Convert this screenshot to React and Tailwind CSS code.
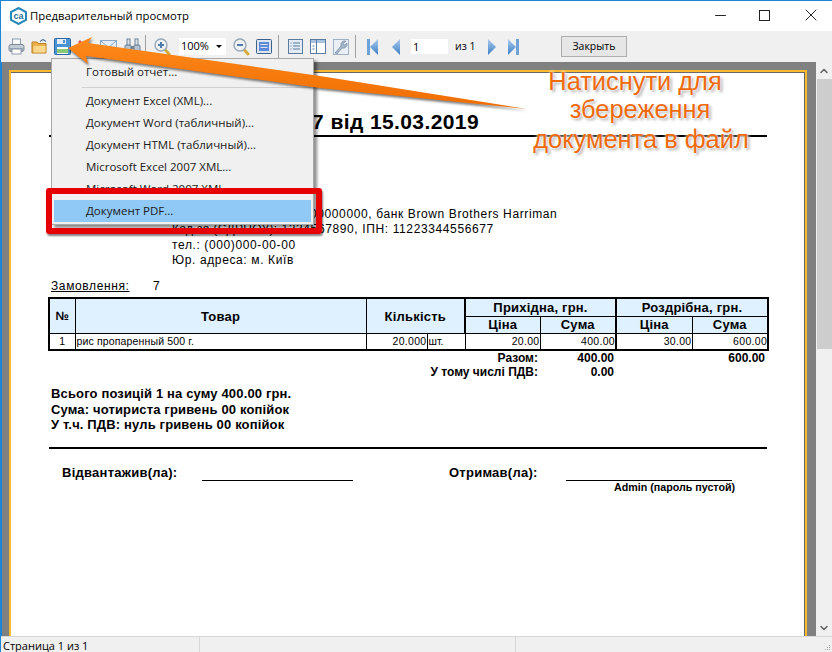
import { ChevronDown, ChevronUp, Minus, X } from "lucide-react";

const UI = "font-['Open_Sans','Noto_Sans',sans-serif]";
const DOC = "font-['Liberation_Sans',Arial,sans-serif]";

// toolbar pictures, all about 16x16
function Printer() {
  return (
    <svg width="17" height="17" viewBox="0 0 17 17">
      <rect x="4.500" y="1" width="8" height="6" fill="#f7f9fb" stroke="#8e9cad" />
      <rect x="1" y="6.500" width="15" height="7" rx="2" fill="#c3ccd6" stroke="#7c8896" />
      <rect x="1.500" y="10" width="14" height="3" fill="#97a3b0" />
      <rect x="4" y="11" width="9" height="5" fill="#fff" stroke="#8e9cad" />
    </svg>
  );
}

function Folder() {
  return (
    <svg width="17" height="17" viewBox="0 0 17 17">
      <path d="M1 4h5l1 1.500h8V15H1z" fill="#eeb04a" stroke="#b87f22" />
      <rect x="2.500" y="8" width="12" height="6.500" fill="#f9d98e" />
      <path d="M9 3.500l3-2 3 2" fill="none" stroke="#5e7b97" strokeWidth="1.200" />
    </svg>
  );
}

function Floppy() {
  return (
    <svg width="17" height="17" viewBox="0 0 17 17">
      <rect x="0.500" y="0.500" width="16" height="16" rx="1" fill="#4a94d6" stroke="#2a659f" />
      <rect x="3" y="1" width="9" height="5" fill="#e3edf6" />
      <rect x="9" y="2" width="2" height="3" fill="#4a94d6" />
      <rect x="3" y="9" width="11" height="7" fill="#fff" />
      <rect x="3" y="11" width="11" height="4" fill="#86c873" />
    </svg>
  );
}

function RedMark() {
  return (
    <svg width="16" height="17" viewBox="0 0 16 17">
      <path d="M5 2l3 3 3-3 2 2-3 3 3 3-2 2-3-3-3 3-2-2 3-3-3-3z" fill="#d9534f" />
    </svg>
  );
}

function Envelope() {
  return (
    <svg width="17" height="13" viewBox="0 0 17 13">
      <rect x="0.500" y="0.500" width="16" height="12" fill="#e2edf8" stroke="#8ba8c6" />
      <path d="M1 1l7.500 6.500L16 1" fill="none" stroke="#8ba8c6" />
    </svg>
  );
}

function Binoculars() {
  return (
    <svg width="17" height="17" viewBox="0 0 17 17">
      <rect x="1" y="7" width="6" height="9" rx="1" fill="#b4c3d2" stroke="#6f8397" />
      <rect x="10" y="7" width="6" height="9" rx="1" fill="#b4c3d2" stroke="#6f8397" />
      <rect x="3" y="1" width="3" height="6" fill="#dbe3ea" stroke="#6f8397" />
      <rect x="11" y="1" width="3" height="6" fill="#dbe3ea" stroke="#6f8397" />
      <rect x="7" y="8" width="3" height="3" fill="#6f8397" />
    </svg>
  );
}

function Magnifier({ plus }) {
  return (
    <svg width="17" height="18" viewBox="0 0 17 18">
      <line x1="10.500" y1="11" x2="15" y2="16" stroke="#d2ac3c" strokeWidth="3" strokeLinecap="round" />
      <circle cx="7" cy="7" r="6" fill="#eef2f6" stroke="#98a7b6" strokeWidth="1.400" />
      <rect x="4" y="6" width="6" height="2" fill="#4f7cab" />
      {plus && <rect x="6" y="4" width="2" height="6" fill="#4f7cab" />}
    </svg>
  );
}

function PageWidth() {
  return (
    <svg width="16" height="15" viewBox="0 0 16 15">
      <rect x="0.500" y="0.500" width="15" height="14" rx="1" fill="#dce6f2" stroke="#3c5f8c" />
      <rect x="3" y="3" width="10" height="9" fill="#5b8bd6" />
      <rect x="4.500" y="5" width="7" height="1" fill="#dce6f2" />
      <rect x="4.500" y="8" width="7" height="1" fill="#dce6f2" />
    </svg>
  );
}

function Outline() {
  return (
    <svg width="15" height="15" viewBox="0 0 15 15">
      <rect x="0.500" y="0.500" width="14" height="14" fill="#e3ecf6" stroke="#5a7aa0" />
      <path d="M5 4h7M5 7h7M5 10h7" stroke="#5a7aa0" />
      <path d="M2.500 4h1M2.500 7h1M2.500 10h1" stroke="#5a7aa0" />
    </svg>
  );
}

function Columns() {
  return (
    <svg width="16" height="15" viewBox="0 0 16 15">
      <rect x="0.500" y="0.500" width="15" height="14" fill="#fff" stroke="#5a7aa0" />
      <rect x="1" y="1" width="14" height="3" fill="#a9c4e2" />
      <line x1="6.500" y1="1" x2="6.500" y2="14" stroke="#5a7aa0" />
      <path d="M2.500 7h2M2.500 10h2" stroke="#5a7aa0" />
    </svg>
  );
}

function Wrench() {
  return (
    <svg width="16" height="17" viewBox="0 0 16 17">
      <rect x="0.500" y="1.500" width="15" height="15" fill="#e9eff5" stroke="#9fb1c4" />
      <path d="M2 15l6-7a4 4 0 0 1 5-5l-2.500 2.500 1 1.500 2.500-2a4 4 0 0 1-5 5l-5 6z" fill="#a3b6ca" stroke="#6d849e" strokeWidth="0.600" />
    </svg>
  );
}

function NavArrow({ dir, bar }) {
  const points = dir === "left" ? "9,0 9,16 1,8" : "1,0 1,16 9,8";
  return (
    <svg width={bar ? 11 : 9} height="16" viewBox={bar ? "0 0 11 16" : "0 0 9 16"}>
      <defs>
        <linearGradient id="nav" x1="0" x2="0" y1="0" y2="1">
          <stop offset="0" stopColor="#a9cbee" />
          <stop offset="1" stopColor="#3d7fc6" />
        </linearGradient>
      </defs>
      {bar && dir === "left" && <rect x="0" y="0" width="3" height="16" fill="#6fa3d8" />}
      {bar && dir === "right" && <rect x="8" y="0" width="3" height="16" fill="#6fa3d8" />}
      <polygon
        points={bar && dir === "left" ? "11,0 11,16 3,8" : bar ? "0,0 0,16 8,8" : points}
        fill="url(#nav)"
      />
    </svg>
  );
}

function AppLogo() {
  return (
    <svg width="17" height="18" viewBox="0 0 17 18">
      <path d="M8.500 1L16 5v8l-7.500 4L1 13V5z" fill="#fff" stroke="#2487b8" strokeWidth="2" />
      <text x="8.500" y="12" textAnchor="middle" fontSize="9" fontWeight="700" fontFamily="Liberation Sans" fill="#1f6f98">
        ca
      </text>
    </svg>
  );
}

function Sep() {
  return <div className="w-px h-[23px] bg-[#a0a0a0]" />;
}

const menuItems = [
  "Документ Excel (XML)...",
  "Документ Word (табличный)...",
  "Документ HTML (табличный)...",
  "Microsoft Excel 2007 XML...",
  "Microsoft Word 2007 XML...",
];

function SaveMenu() {
  return (
    <div className={`absolute left-[50px] top-[57px] w-[263px] h-[167px] bg-[#f0f0f0] border border-[#a9a9a9] shadow-[3px_3px_3px_rgba(0,0,0,0.45)] text-[11.500px] text-[#1a1a1a] ${UI}`}>
      <div className="h-[22px] mt-[2px] pl-[34px] flex items-center">Готовый отчет...</div>
      <div className="h-px bg-[#d0d0d0] ml-[30px] mr-[2px] mt-[4px] mb-[2px]" />
      {menuItems.map((label) => (
        <div key={label} className="h-[22px] pl-[34px] flex items-center">{label}</div>
      ))}
      <div className="h-[22px] mx-[2px] pl-[32px] flex items-center bg-[#90c8f6]">Документ PDF...</div>
    </div>
  );
}

function Signature({ label, lineWidth, gap, width }) {
  return (
    <div className={`flex items-start ${width}`}>
      <span>{label}</span>
      <div className={`border-b border-black h-[16px] ${lineWidth} ${gap}`} />
    </div>
  );
}

function Report() {
  return (
    <div className={`ml-[37px] w-[720px] text-black ${DOC}`}>
      <div className="h-[65px] flex items-end justify-end pr-[288px] font-bold text-[21px] tracking-[0.400px] leading-none border-b-2 border-black ml-px mr-px pb-[3px]">
        7 від 15.03.2019
      </div>

      <div className="mt-[70px] ml-[124px] text-[12px] leading-[15.330px] tracking-[0.620px]">
        <div>Рахунок, р/р 0000000000000000, банк Brown Brothers Harriman</div>
        <div><span className="tracking-[0.300px]">Код за (ЄДРПОУ):</span> 1234567890, ІПН: 11223344556677</div>
        <div>тел.: (000)000-00-00</div>
        <div>Юр. адреса: м. Київ</div>
      </div>

      <div className="mt-[11px] ml-[3px] flex text-[12px] leading-[15px] tracking-[0.620px]">
        <span className="underline w-[102px]">Замовлення:</span>
        <span>7</span>
      </div>

      <table className="mt-[3px] w-[719px] table-fixed border-collapse border-2 border-black">
        <colgroup>
          <col className="w-[26px]" />
          <col className="w-[291px]" />
          <col className="w-[61px]" />
          <col className="w-[38px]" />
          <col className="w-[75px]" />
          <col className="w-[76px]" />
          <col className="w-[76px]" />
          <col className="w-[76px]" />
        </colgroup>
        <thead className="bg-[#dff1ff] text-[13px] tracking-[0.200px] leading-none font-bold">
          <tr className="h-[18px]">
            <th rowSpan="2" className="border border-black font-bold text-[12px]">№</th>
            <th rowSpan="2" className="border border-black font-bold">Товар</th>
            <th rowSpan="2" colSpan="2" className="border border-black border-r-2 font-bold">Кількість</th>
            <th colSpan="2" className="border border-black border-r-2 font-bold">Прихідна, грн.</th>
            <th colSpan="2" className="border border-black font-bold">Роздрібна, грн.</th>
          </tr>
          <tr className="h-[17px]">
            <th className="border border-black font-bold">Ціна</th>
            <th className="border border-black border-r-2 font-bold">Сума</th>
            <th className="border border-black font-bold">Ціна</th>
            <th className="border border-black font-bold">Сума</th>
          </tr>
        </thead>
        <tbody className="text-[10.500px] leading-none">
          <tr className="h-[17px]">
            <td className="border border-black text-center">1</td>
            <td className="border border-black pl-px tracking-[0.150px]">рис пропаренный 500 г.</td>
            <td className="border border-black text-right tracking-[0.300px]">20.000</td>
            <td className="border border-black pl-px">шт.</td>
            <td className="border border-black text-right tracking-[0.300px]">20.00</td>
            <td className="border border-black border-r-2 text-right tracking-[0.300px]">400.00</td>
            <td className="border border-black text-right tracking-[0.300px]">30.00</td>
            <td className="border border-black text-right tracking-[0.300px]">600.00</td>
          </tr>
        </tbody>
      </table>

      <div className="grid grid-cols-[490px_76px_151px] text-[12px] leading-[14px] font-bold text-right">
        <span>Разом:</span>
        <span>400.00</span>
        <span>600.00</span>
        <span>У тому числі ПДВ:</span>
        <span>0.00</span>
        <span />
      </div>

      <div className="mt-[7px] ml-[3px] text-[13px] leading-[15.500px] font-bold tracking-[0.150px]">
        <div>Всього позицій 1 на суму 400.00 грн.</div>
        <div>Сума: чотириста гривень 00 копійок</div>
        <div>У т.ч. ПДВ: нуль гривень 00 копійок</div>
      </div>

      <div className="mt-[14px] ml-px mr-px h-[2px] bg-black" />

      <div className="mt-[16px] ml-[14px] flex text-[13px] leading-[15px] font-bold tracking-[0.250px]">
        <Signature label="Відвантажив(ла):" lineWidth="w-[151px]" gap="ml-[25px]" width="w-[387px]" />
        <Signature label="Отримав(ла):" lineWidth="w-[166px]" gap="ml-[28px]" width="w-[283px]" />
      </div>
      <div className="ml-[566px] text-[10.700px] leading-[13px] font-bold whitespace-nowrap">
        Admin (пароль пустой)
      </div>
    </div>
  );
}

function Annotations() {
  return (
    <>
      <SaveMenu />
      <div className="absolute left-[45px] top-[187px] w-[276px] h-[46px] rounded-[3px] border-[6px] border-[#e60000] shadow-[1px_2px_2px_rgba(0,0,0,0.5)]" />
      <svg className="absolute -left-px -top-px drop-shadow-[1px_2px_1px_rgba(0,0,0,0.5)]" width="832" height="160" viewBox="0 0 832 160">
        <defs>
          <linearGradient id="arrow" x1="0" x2="0" y1="0" y2="1">
            <stop offset="0" stopColor="#ff8a1c" />
            <stop offset="1" stopColor="#ef6c00" />
          </linearGradient>
        </defs>
        <polygon
          points="68,48 92,37 88,43 320,76 527,109 320,88 86,56 88,64"
          fill="url(#arrow)"
        />
      </svg>
      <div className={`absolute left-[515px] top-[66px] w-[250px] text-center text-[25.400px] leading-[28px] text-[#ee6a0c] [text-shadow:0_0_2px_#fff,0_0_4px_#fff,2px_2px_3px_#999] ${DOC}`}>
        <div className="pr-[12px]">Натиснути для</div>
        <div className="pr-[2px]">збереження</div>
        <div className="mt-[2px]">документа в файл</div>
      </div>
    </>
  );
}

export default function App() {
  return (
    <div className="relative w-[832px] h-[652px] overflow-hidden flex flex-col bg-[#f0f0f0] border-t border-l border-[#1b86d8]">
      {/* title bar */}
      <div className="h-[30px] shrink-0 bg-white flex items-center pl-[9px]">
        <AppLogo />
        <span className={`ml-[3px] text-[11.300px] text-black ${UI}`}>Предварительный просмотр</span>
        <div className="ml-auto mb-[2px] flex items-center text-[#222] pr-[11px]">
          <Minus size={17} strokeWidth={1.400} className="mr-[30px]" />
          <div className="w-[11px] h-[11px] border border-[#222] mr-[31px]" />
          <X size={20} strokeWidth={1.200} />
        </div>
      </div>

      {/* toolbar */}
      <div className={`h-[31px] shrink-0 bg-[#f0f0f0] flex items-center pl-[7px] text-[11px] text-black ${UI}`}>
        <div className="flex items-center gap-[6px]">
          <Printer />
          <Folder />
          <Floppy />
        </div>
        <div className="ml-[4px]"><RedMark /></div>
        <div className="ml-[9px]"><Envelope /></div>
        <div className="ml-[7px]"><Binoculars /></div>
        <div className="ml-[4px]"><Sep /></div>
        <div className="ml-[8px]"><Magnifier plus /></div>
        <div className="ml-[8px] w-[47px] h-[17px] bg-white flex items-center justify-between pl-[2px] pr-[4px]">
          <span>100%</span>
          <span className="border-x-[3px] border-t-[3px] border-x-transparent border-t-black" />
        </div>
        <div className="ml-[7px]"><Magnifier /></div>
        <div className="ml-[6px]"><PageWidth /></div>
        <div className="ml-[6px]"><Sep /></div>
        <div className="ml-[9px]"><Outline /></div>
        <div className="ml-[7px]"><Columns /></div>
        <div className="ml-[7px]"><Wrench /></div>
        <div className="ml-[6px]"><Sep /></div>
        <div className="ml-[11px]"><NavArrow dir="left" bar /></div>
        <div className="ml-[13px]"><NavArrow dir="left" /></div>
        <div className="ml-[11px] w-[37px] h-[15px] bg-white leading-[15px] pl-[2px]">1</div>
        <span className="ml-[7px] w-[21px] text-[10.500px] whitespace-nowrap">из 1</span>
        <div className="ml-[11px]"><NavArrow dir="right" /></div>
        <div className="ml-[12px]"><NavArrow dir="right" bar /></div>
        <button className="ml-[42px] w-[66px] h-[21px] bg-[#e6e6e6] border border-[#adadad] text-[10.500px]">Закрыть</button>
      </div>

      {/* preview area */}
      <div className="flex-1 min-h-0 flex">
        <div className="flex-1 min-w-0 bg-[#808080] border-l border-[#1b86d8] pl-[7px] pr-[9px] pt-[8px] overflow-hidden">
          <div className="h-[600px] bg-white border-2 border-[#fbb92e] shadow-[inset_-1px_1px_0_#666]">
            <Report />
          </div>
        </div>
        <div className="w-[16px] shrink-0 bg-[#f0f0f0] flex flex-col">
          <div className="h-[17px] flex items-center justify-center">
            <ChevronUp size={12} strokeWidth={3} className="text-[#606060]" />
          </div>
          <div className="h-[270px] ml-px bg-[#cdcdcd]" />
          <div className="mt-auto h-[17px] flex items-center justify-center">
            <ChevronDown size={12} strokeWidth={3} className="text-[#606060]" />
          </div>
        </div>
      </div>

      {/* status bar */}
      <div className={`relative h-[16px] shrink-0 bg-[#f0f0f0] border-t border-[#d7d7d7] flex text-[11px] leading-[12px] text-black ${UI}`}>
        <div className="w-[199px] pl-[2px] pt-[3px] border-r border-[#d7d7d7] whitespace-nowrap">Страница 1 из 1</div>
        <div className="w-[316px] border-r border-[#d7d7d7]" />
        <svg className="absolute right-px bottom-px" width="7" height="7" viewBox="0 0 7 7">
          <path d="M5 1h1v1H5zM3 3h1v1H3zM5 3h1v1H5zM1 5h1v1H1zM3 5h1v1H3zM5 5h1v1H5z" fill="#a8a8a8" />
        </svg>
      </div>

      <Annotations />
    </div>
  );
}
